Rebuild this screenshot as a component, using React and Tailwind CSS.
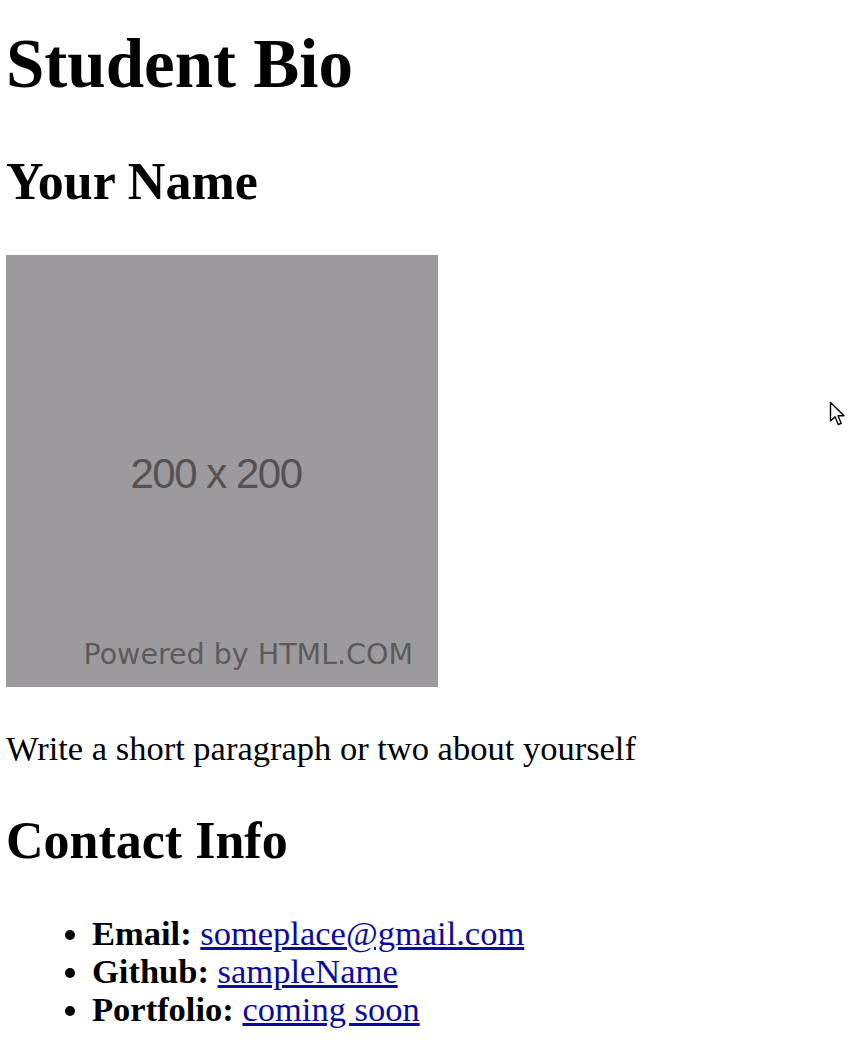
import React from "react";

const contacts = [
  { label: "Email:", text: "someplace@gmail.com" },
  { label: "Github:", text: "sampleName" },
  { label: "Portfolio:", text: "coming soon" },
];

// arrow pointer sitting over the page
const Pointer = () => (
  <svg
    className="absolute left-[829px] top-[401px]"
    width="18"
    height="28"
    viewBox="0 0 18 28"
  >
    <path
      d="M1.5 1.5 L1.5 20 L6 15.8 L9.3 23.5 L12.2 22.3 L9 14.8 L15 14.8 Z"
      fill="white"
      stroke="black"
      strokeWidth="1.4"
      strokeLinejoin="round"
    />
  </svg>
);

const App = () => {
  return (
    <div
      className="relative min-h-[1064px] bg-white px-[6px] pt-[26px] text-black"
      style={{ fontFamily: '"Liberation Serif", "Times New Roman", serif' }}
    >
      <h1 className="text-[69px] font-bold leading-[76px]">Student Bio</h1>
      <h2 className="mt-[51px] text-[52px] font-bold leading-[58px]">Your Name</h2>

      {/* placeholder picture */}
      <div
        className="mt-[44px] flex h-[432px] w-[432px] flex-col bg-[#9c9a9d]"
        style={{ fontFamily: '"Liberation Sans", Arial, sans-serif' }}
      >
        <div className="flex flex-1 justify-center pr-[12px] pt-[198px]">
          <span className="text-[42px] leading-none tracking-[-1.5px] text-[#545254]">
            200 x 200
          </span>
        </div>
        <span
          className="self-end pb-[18px] pr-[25px] text-[28.5px] leading-none text-[#5c5a5c]"
          style={{ fontFamily: '"DejaVu Sans", Verdana, sans-serif' }}
        >
          Powered by HTML.COM
        </span>
      </div>

      <p className="mt-[42px] text-[34.5px] leading-[38px]">
        Write a short paragraph or two about yourself
      </p>

      <h2 className="mt-[45px] text-[52px] font-bold leading-[58px]">Contact Info</h2>

      <ul className="mt-[44px] list-disc pl-[86px] text-[34.5px] leading-[38px]">
        {contacts.map((c) => (
          <li key={c.label}>
            <b>{c.label}</b>{" "}
            <a href="#" className="text-[#0c0c9c] underline">
              {c.text}
            </a>
          </li>
        ))}
      </ul>

      <Pointer />
    </div>
  );
};

export default App;
